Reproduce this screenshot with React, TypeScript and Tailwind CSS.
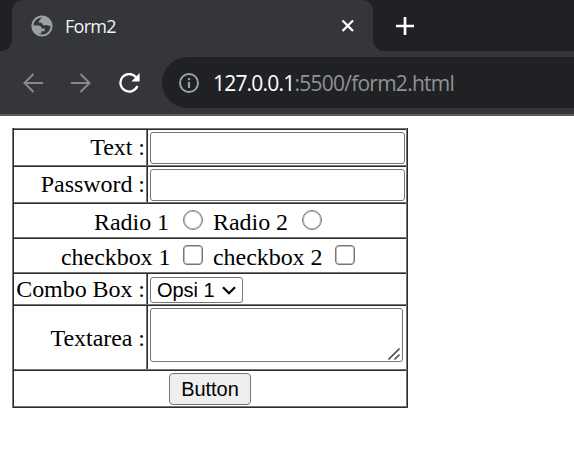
import type { ReactNode } from 'react';

const serif = "font-['Liberation_Serif',serif]";
const sans = "font-['Liberation_Sans',sans-serif]";
const ui = "font-['Open_Sans',sans-serif]";

function Line({ className, children }: { className: string; children: ReactNode }) {
  return (
    <div className={`border-t border-[#767676] ${className}`}>
      <div className="flex h-full border-t border-[#2c2c2c]">{children}</div>
    </div>
  );
}

function Label({ children, className = '' }: { children: ReactNode; className?: string }) {
  return (
    <div className={`flex w-[133px] shrink-0 justify-end whitespace-pre border-r border-[#767676] pr-[1px] leading-[28px] ${className}`}>
      {children}
    </div>
  );
}

function Cell({ children, className = '' }: { children: ReactNode; className?: string }) {
  return <div className={`flex-1 border-l border-[#2c2c2c] pl-[2px] ${className}`}>{children}</div>;
}

const field = 'block appearance-none rounded-[3px] border border-[#767676] bg-white outline-none';
const toggle = 'mt-[2px] appearance-none border border-[#767676] shadow-[inset_0_0_0_1px_#bcbcbc]';

function Browser() {
  return (
    <header className={`h-[116px] border-b-2 border-[#5b5c5f] bg-[#35363a] ${ui}`}>
      <div className="flex h-[51px] bg-[#202124]">
        <div className="w-3 bg-[#35363a]">
          <div className="h-full rounded-br-[11px] bg-[#202124]" />
        </div>
        <div className="flex w-[361px] items-center rounded-t-[11px] bg-[#35363a] pl-[19px]">
          <svg width="22" height="22" viewBox="0 0 22 22">
            <circle cx="11" cy="11" r="9.6" fill="none" stroke="#9aa0a6" strokeWidth="2" />
            <path fill="#9aa0a6" d="M12 1.4C11 3 9.7 3.1 9.3 4.5C9 6 7.3 5.7 7.4 7.3C8.2 8.2 10.5 7 11.1 8.3C11.4 9.8 12.2 10.8 14.2 10.4C15.3 9.6 16.6 9.9 17.4 10.8L20.6 11C20.8 6 16.8 1.7 12 1.4ZM1.3 10.5H6.7C9 10.5 10.6 11.6 10.8 13.6H13.7V16.2H10.4V18.6H8.3V20.5C4.2 19.4 1.1 15.5 1.3 10.5Z" />
          </svg>
          <span className="ml-[12px] w-[271px] text-[18px] leading-6 tracking-[-0.7px] text-[#f1f3f4]">Form2</span>
          <svg className="ml-[5px]" width="14" height="14" viewBox="0 0 14 14" stroke="white" strokeWidth="2.3">
            <path d="M1.5 1.5 12 12M12 1.5 1.5 12" />
          </svg>
        </div>
        <div className="flex-1 bg-[#35363a]">
          <div className="flex h-full items-center rounded-bl-[11px] bg-[#202124] pl-[23px]">
            <svg width="18" height="18" viewBox="0 0 18 18" stroke="white" strokeWidth="2.7">
              <path d="M0 9H18M9 0V18" />
            </svg>
          </div>
        </div>
      </div>
      <div className="flex h-[63px] items-center pl-[23px]">
        <svg width="20" height="20" viewBox="0 0 20 20" fill="none" stroke="#88898c" strokeWidth="2">
          <path d="M20 10H1.5M10.5 1 1.5 10 10.5 19" />
        </svg>
        <svg className="ml-7" width="20" height="20" viewBox="0 0 20 20" fill="none" stroke="#88898c" strokeWidth="2">
          <path d="M0 10H18.5M9.5 1 18.5 10 9.5 19" />
        </svg>
        <svg className="ml-7" width="21" height="20" viewBox="0 0 21 20" fill="none" stroke="white" strokeWidth="2.3">
          <path d="M17 4.2A8.8 8.8 0 1 0 18.4 13" />
          <path d="M20.6 0V8.4H12.4Z" fill="white" stroke="none" />
        </svg>
        <div className="ml-[22px] flex h-[51px] flex-1 items-center rounded-l-full bg-[#202124] pl-[17px]">
          <svg width="20" height="20" viewBox="0 0 20 20" fill="none" stroke="#9aa0a6" strokeWidth="2">
            <circle cx="10" cy="10" r="9" />
            <path d="M10 9V15M10 5V7.2" strokeWidth="2.2" />
          </svg>
          <span className="ml-[14px] whitespace-nowrap text-[21px] leading-7 tracking-[-0.75px] text-[#909295]">
            <span className="tracking-[-0.8px] text-white">127.0.0.1</span>:5500/form2.html
          </span>
        </div>
      </div>
    </header>
  );
}

export default function App() {
  return (
    <div className="h-[459px] w-[574px] overflow-hidden bg-white">
      <Browser />
      <form
        className={`ml-3 mt-3 flex h-[280px] w-[396px] border-l border-r border-l-[#767676] border-r-[#2c2c2c] text-[24px] tracking-[-0.05px] text-black ${serif}`}
        onSubmit={(e) => e.preventDefault()}
      >
        <div className="flex flex-1 flex-col border-l border-r border-b border-l-[#2c2c2c] border-r-[#767676] border-b-[#2c2c2c]">
          <Line className="h-[37px]">
            <Label className="pt-[3px]">Text :</Label>
            <Cell className="pt-[2px]"><input type="text" className={`${field} h-8 w-[255px]`} /></Cell>
          </Line>
          <Line className="h-[37px]">
            <Label className="pt-[3px]">Password :</Label>
            <Cell className="pt-[2px]"><input type="password" className={`${field} h-8 w-[255px]`} /></Cell>
          </Line>
          <Line className="h-[35px]">
            <div className="flex w-full whitespace-nowrap pl-[80px] pt-[4px] leading-[28px]">
              <span className="w-[89px]">Radio 1</span>
              <input type="radio" name="radio" className={`${toggle} size-[20px] rounded-full`} />
              <span className="ml-[10px] w-[89px]">Radio 2</span>
              <input type="radio" name="radio" className={`${toggle} size-[20px] rounded-full`} />
            </div>
          </Line>
          <Line className="h-[35px]">
            <div className="flex w-full whitespace-nowrap pl-[47px] pt-[4px] leading-[28px]">
              <span className="w-[122px]">checkbox 1</span>
              <input type="checkbox" className={`${toggle} size-[20px] rounded-[4px]`} />
              <span className="ml-[10px] w-[122px]">checkbox 2</span>
              <input type="checkbox" className={`${toggle} size-[20px] rounded-[4px]`} />
            </div>
          </Line>
          <Line className="h-8">
            <Label className="pt-[1px]">Combo Box :</Label>
            <Cell className="pt-[3px]">
              <button type="button" className={`${field} ${sans} flex h-[26px] w-[93px] items-center pl-[6px] text-[20px] leading-6`}>
                <span className="w-[65px] text-left">Opsi 1</span>
                <svg width="14" height="9" viewBox="0 0 14 9" fill="none" stroke="black" strokeWidth="2.3">
                  <path d="M1 1.3 7 7.2 13 1.3" />
                </svg>
              </button>
            </Cell>
          </Line>
          <Line className="h-[65px]">
            <Label className="pt-[18px]">Textarea :</Label>
            <Cell className="pt-[2px]">
              <div className="relative h-[54px] w-[253px]">
                <textarea className={`${field} h-full w-full resize-none`} />
                <svg className="absolute bottom-[2px] right-[3px]" width="12" height="12" viewBox="0 0 12 12" stroke="#555" strokeWidth="1.6">
                  <path d="M.5 11.5 11.5 .5M6.5 11.5 11.5 6.5" />
                </svg>
              </div>
            </Cell>
          </Line>
          <Line className="h-[37px]">
            <div className="flex w-full pl-[155px] pt-[2px]">
              <button type="button" className={`h-8 w-[82px] rounded-[4px] border border-[#767676] bg-[#efefef] text-[20px] leading-[28px] ${sans}`}>Button</button>
            </div>
          </Line>
          <div className="h-px bg-[#767676]" />
        </div>
      </form>
    </div>
  );
}
